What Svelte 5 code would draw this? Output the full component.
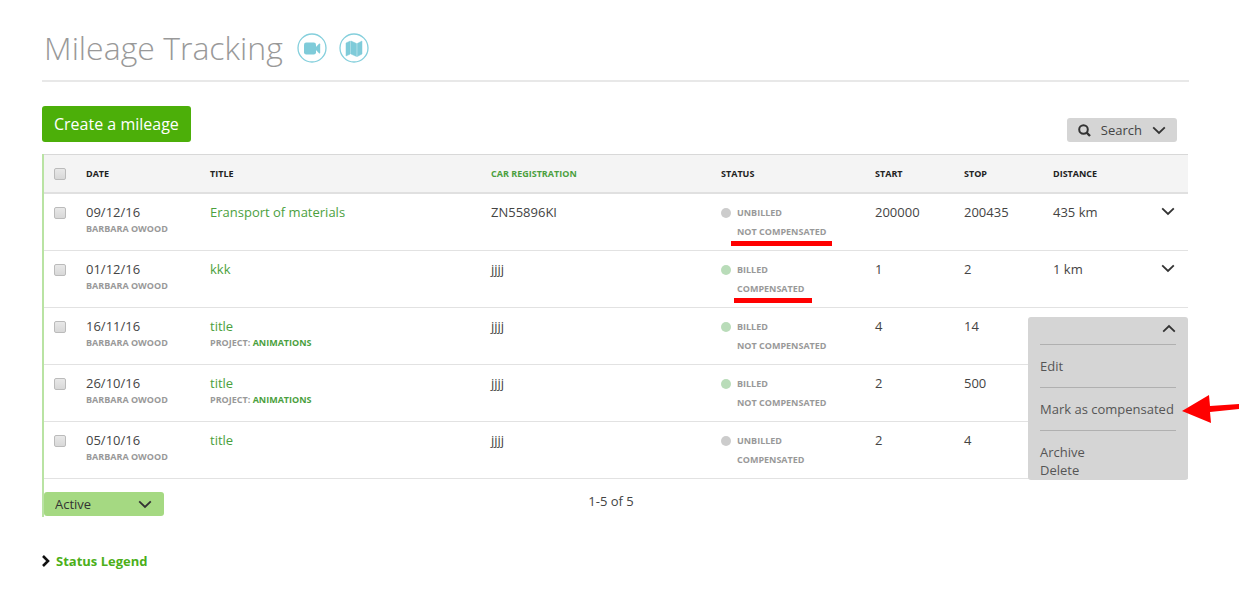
<script lang="ts">
    type Mileage = {
        date: string;
        user: string;
        title: string;
        project?: string;
        car: string;
        billed: boolean;
        compensated: boolean;
        mark?: string;
        start: string;
        stop: string;
        distance: string;
    };

    const user = 'BARBARA OWOOD';

    const mileages: Mileage[] = [
        { date: '09/12/16', user, title: 'Eransport of materials', car: 'ZN55896KI', billed: false, compensated: false, mark: 'wide', start: '200000', stop: '200435', distance: '435 km' },
        { date: '01/12/16', user, title: 'kkk', car: 'jjjj', billed: true, compensated: true, mark: 'narrow', start: '1', stop: '2', distance: '1 km' },
        { date: '16/11/16', user, title: 'title', project: 'ANIMATIONS', car: 'jjjj', billed: true, compensated: false, start: '4', stop: '14', distance: '10 km' },
        { date: '26/10/16', user, title: 'title', project: 'ANIMATIONS', car: 'jjjj', billed: true, compensated: false, start: '2', stop: '500', distance: '' },
        { date: '05/10/16', user, title: 'title', car: 'jjjj', billed: false, compensated: true, start: '2', stop: '4', distance: '' }
    ];

    let openRow = $state(2);
    let filter = $state('Active');

    function toggle(index: number) {
        openRow = openRow === index ? -1 : index;
    }
</script>

{#snippet chevron(up = false)}
    <svg class="chevron" class:up width="14" height="9" viewBox="0 0 14 9" aria-hidden="true">
        <path d="M1.2 1.3 L7 7 L12.8 1.3" fill="none" stroke="#333" stroke-width="1.8" />
    </svg>
{/snippet}

<main class="page">
    <header class="page-header">
        <h1>Mileage Tracking</h1>
        <a href="#video" class="help" aria-label="Video">
            <svg width="30" height="30" viewBox="0 0 30 30">
                <circle cx="15" cy="15" r="14" fill="none" stroke="#84cfdc" stroke-width="1.3" />
                <rect x="7" y="9.5" width="12" height="12" rx="2.2" fill="#7fcbd9" />
                <path d="M17.5 15.5 L22 10.8 Q23.2 10 23.2 11.3 V19.7 Q23.2 21 22 20.2 Z" fill="#7fcbd9" />
            </svg>
        </a>
        <a href="#guide" class="help" aria-label="Guide">
            <svg width="30" height="30" viewBox="0 0 30 30">
                <circle cx="15" cy="15" r="14" fill="none" stroke="#84cfdc" stroke-width="1.3" />
                <path d="M7 10 L11.3 8 V21 L7 23 Z M12 8 L17.5 10.5 V23.5 L12 21 Z M18.3 10.5 L23 8 V21 L18.3 23.5 Z" fill="#7fcbd9" stroke="#7fcbd9" stroke-width="0.5" />
            </svg>
        </a>
    </header>

    <div class="toolbar">
        <button type="button" class="create">Create a mileage</button>
        <button type="button" class="search">
            <svg width="13" height="13" viewBox="0 0 13 13" aria-hidden="true">
                <circle cx="5.5" cy="5.5" r="4.3" fill="none" stroke="#333" stroke-width="2" />
                <path d="M8.5 8.5 L12 12" stroke="#333" stroke-width="2.4" />
            </svg>
            <span>Search</span>
            {@render chevron()}
        </button>
    </div>

    <section class="list">
        <table>
            <colgroup>
                <col class="col-check" />
                <col class="col-date" />
                <col />
                <col class="col-car" />
                <col class="col-status" />
                <col class="col-number" />
                <col class="col-number" />
                <col class="col-distance" />
                <col class="col-action" />
            </colgroup>
            <thead>
                <tr>
                    <th class="check"><input type="checkbox" aria-label="Select all" /></th>
                    <th>DATE</th>
                    <th>TITLE</th>
                    <th class="sorted">CAR REGISTRATION</th>
                    <th>STATUS</th>
                    <th>START</th>
                    <th>STOP</th>
                    <th>DISTANCE</th>
                    <th></th>
                </tr>
            </thead>
            <tbody>
                {#each mileages as row, i}
                    <tr>
                        <td class="check"><input type="checkbox" aria-label="Select {row.date}" /></td>
                        <td>
                            {row.date}
                            <div class="sub">{row.user}</div>
                        </td>
                        <td>
                            <a href="#mileage-{i}">{row.title}</a>
                            {#if row.project}
                                <div class="sub">PROJECT: <a href="#project">{row.project}</a></div>
                            {/if}
                        </td>
                        <td>{row.car}</td>
                        <td class="status">
                            <div class="state" class:billed={row.billed}>{row.billed ? 'BILLED' : 'UNBILLED'}</div>
                            <div class="state-detail">
                                {row.compensated ? 'COMPENSATED' : 'NOT COMPENSATED'}
                                {#if row.mark}<span class="mark {row.mark}"></span>{/if}
                            </div>
                        </td>
                        <td>{row.start}</td>
                        <td>{row.stop}</td>
                        <td>{openRow === i ? '' : row.distance}</td>
                        <td class="action">
                            {#if openRow === i}
                                <div class="menu">
                                    <button type="button" class="toggle" aria-label="Close actions" onclick={() => toggle(i)}>
                                        {@render chevron(true)}
                                    </button>
                                    <div class="group"><a href="#edit">Edit</a></div>
                                    <div class="group">
                                        <a href="#compensate">Mark as compensated</a>
                                        <svg class="arrow" width="58" height="28" viewBox="0 0 58 28" aria-hidden="true">
                                            <path d="M0 16 L27 0 L28 11 L57 9 V14 L28 17 L29 28 Z" fill="#f00" />
                                        </svg>
                                    </div>
                                    <div class="group">
                                        <a href="#archive">Archive</a>
                                        <a href="#delete">Delete</a>
                                    </div>
                                </div>
                            {:else if row.distance}
                                <button type="button" class="toggle" aria-label="Open actions" onclick={() => toggle(i)}>
                                    {@render chevron()}
                                </button>
                            {/if}
                        </td>
                    </tr>
                {/each}
            </tbody>
        </table>

        <div class="list-footer">
            <div class="filter">
                <select bind:value={filter} aria-label="Filter">
                    <option>Active</option>
                    <option>Archived</option>
                </select>
                {@render chevron()}
            </div>
            <span class="count">1-5 of 5</span>
        </div>
    </section>

    <a href="#legend" class="legend">
        <svg width="8" height="12" viewBox="0 0 8 12" aria-hidden="true">
            <path d="M1 1 L6 6 L1 11" fill="none" stroke="#111" stroke-width="2.6" />
        </svg>
        Status Legend
    </a>
</main>

<style>
    :global(body) {
        margin: 0;
        background: #fff;
    }

    .page {
        padding: 24px 62px 40px 42px;
        font-family: 'Open Sans', sans-serif;
        font-size: 13px;
        line-height: 18px;
        color: #444;
    }

    a {
        color: #4b9f3e;
        text-decoration: none;
    }

    button,
    select {
        border: 0;
        font-family: inherit;
        font-size: 13px;
        color: #444;
        cursor: pointer;
    }

    .page-header {
        display: flex;
        align-items: center;
        gap: 12px;
        box-sizing: border-box;
        height: 58px;
        padding: 0 0 9px 2px;
        border-bottom: 2px solid #e8e8e8;
    }

    h1 {
        margin: 0 2px 0 0;
        font-size: 32px;
        line-height: 40px;
        font-weight: 300;
        color: #999;
    }

    .help,
    .help svg {
        display: block;
    }

    .toolbar {
        display: flex;
        justify-content: space-between;
        align-items: flex-end;
        padding: 24px 12px 12px 0;
    }

    .create {
        height: 36px;
        padding: 0 12px;
        border-radius: 3px;
        background: #4caf09;
        font-size: 16px;
        color: #fff;
    }

    .search {
        display: flex;
        align-items: center;
        gap: 10px;
        height: 24px;
        padding: 0 11px;
        border-radius: 3px;
        background: #d5d5d5;
    }

    .chevron {
        display: block;
    }

    .chevron.up {
        transform: rotate(180deg);
    }

    .list {
        margin-right: 1px;
        border-left: 2px solid #b9e3a3;
    }

    table {
        width: 100%;
        table-layout: fixed;
        border-collapse: separate;
        border-spacing: 0;
    }

    .col-check {
        width: 42px;
    }

    .col-date {
        width: 124px;
    }

    .col-car {
        width: 230px;
    }

    .col-status {
        width: 154px;
    }

    .col-number {
        width: 89px;
    }

    .col-distance {
        width: 99px;
    }

    .col-action {
        width: 36px;
    }

    th {
        box-sizing: border-box;
        height: 40px;
        padding: 0;
        border-top: 1px solid #d8d8d8;
        border-bottom: 2px solid #e0e0e0;
        background: #f4f4f4;
        font-size: 9px;
        font-weight: 700;
        text-align: left;
        color: #222;
    }

    th.sorted {
        color: #4b9f3e;
    }

    td {
        box-sizing: border-box;
        height: 57px;
        padding: 9px 0 0;
        border-bottom: 1px solid #e2e2e2;
        vertical-align: top;
    }

    .check {
        padding-left: 10px;
    }

    input[type='checkbox'] {
        appearance: none;
        display: block;
        box-sizing: border-box;
        width: 12px;
        height: 12px;
        margin: 0;
        border: 1px solid #bbb;
        border-radius: 2px;
        background: linear-gradient(#e8e8e8, #d8d8d8);
    }

    td input[type='checkbox'] {
        margin-top: 4px;
    }

    input[type='checkbox']:checked {
        background: #4caf09;
    }

    .sub,
    .status {
        font-size: 9px;
        font-weight: 700;
        color: #999;
    }

    .sub {
        line-height: 16px;
    }

    .status {
        line-height: 19px;
    }

    .state {
        display: flex;
        align-items: center;
        gap: 6px;
    }

    .state::before {
        content: '';
        width: 10px;
        height: 10px;
        border-radius: 50%;
        background: #ccc;
    }

    .state.billed::before {
        background: #b9dcb9;
    }

    .state-detail {
        position: relative;
        margin-left: 16px;
    }

    .mark {
        position: absolute;
        left: -6px;
        top: 19px;
        width: 101px;
        height: 5px;
        background: #f00;
    }

    .mark.narrow {
        left: -3px;
        width: 78px;
    }

    .action {
        position: relative;
    }

    .toggle {
        display: block;
        margin-left: auto;
        padding: 4px 13px 5px 9px;
        background: none;
    }

    .menu {
        position: absolute;
        top: 9px;
        right: 0;
        z-index: 1;
        box-sizing: border-box;
        width: 160px;
        padding: 3px 12px 0;
        border-radius: 3px;
        background: #d5d5d5;
    }

    .menu .toggle {
        padding: 4px 0 11px;
    }

    .group {
        position: relative;
        padding: 12px 0;
        border-top: 1px solid #b0b0b0;
    }

    .group:last-child {
        padding-bottom: 1px;
    }

    .group a {
        display: block;
        white-space: nowrap;
        color: #555;
    }

    .arrow {
        position: absolute;
        top: 7px;
        left: 142px;
    }

    .list-footer {
        display: grid;
        grid-template-columns: 1fr auto 1fr;
        align-items: start;
        padding: 13px 10px 1px 0;
    }

    .filter {
        display: grid;
        align-items: center;
        width: 120px;
    }

    .filter select,
    .filter .chevron {
        grid-area: 1 / 1;
    }

    .filter select {
        appearance: none;
        width: 100%;
        height: 24px;
        padding: 0 11px;
        border-radius: 3px;
        background: #a5d982;
        color: #333;
    }

    .filter .chevron {
        justify-self: end;
        margin-right: 12px;
        pointer-events: none;
    }

    .legend {
        display: inline-flex;
        align-items: center;
        gap: 6px;
        margin-top: 35px;
        font-weight: 700;
        color: #4caf1a;
    }
</style>
